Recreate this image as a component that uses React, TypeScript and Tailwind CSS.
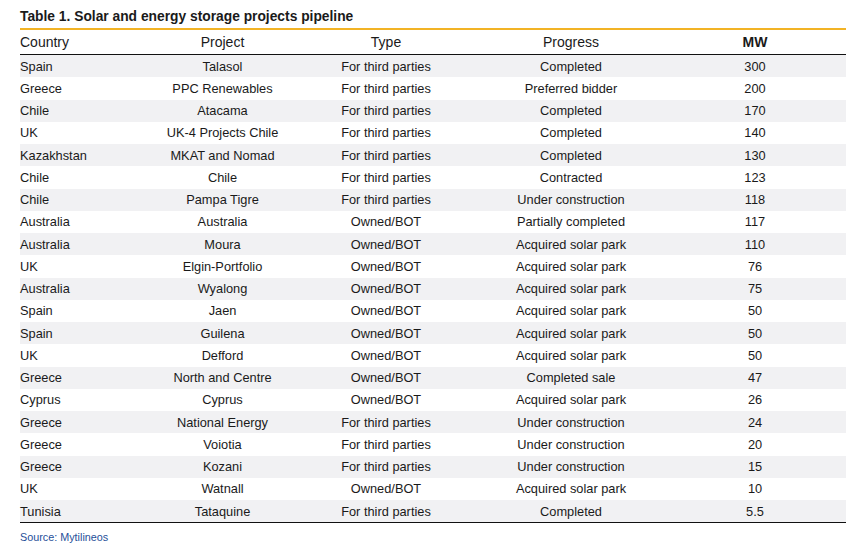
const rows: [string, string, string, string, string][] = [
  ['Spain', 'Talasol', 'For third parties', 'Completed', '300'],
  ['Greece', 'PPC Renewables', 'For third parties', 'Preferred bidder', '200'],
  ['Chile', 'Atacama', 'For third parties', 'Completed', '170'],
  ['UK', 'UK-4 Projects Chile', 'For third parties', 'Completed', '140'],
  ['Kazakhstan', 'MKAT and Nomad', 'For third parties', 'Completed', '130'],
  ['Chile', 'Chile', 'For third parties', 'Contracted', '123'],
  ['Chile', 'Pampa Tigre', 'For third parties', 'Under construction', '118'],
  ['Australia', 'Australia', 'Owned/BOT', 'Partially completed', '117'],
  ['Australia', 'Moura', 'Owned/BOT', 'Acquired solar park', '110'],
  ['UK', 'Elgin-Portfolio', 'Owned/BOT', 'Acquired solar park', '76'],
  ['Australia', 'Wyalong', 'Owned/BOT', 'Acquired solar park', '75'],
  ['Spain', 'Jaen', 'Owned/BOT', 'Acquired solar park', '50'],
  ['Spain', 'Guilena', 'Owned/BOT', 'Acquired solar park', '50'],
  ['UK', 'Defford', 'Owned/BOT', 'Acquired solar park', '50'],
  ['Greece', 'North and Centre', 'Owned/BOT', 'Completed sale', '47'],
  ['Cyprus', 'Cyprus', 'Owned/BOT', 'Acquired solar park', '26'],
  ['Greece', 'National Energy', 'For third parties', 'Under construction', '24'],
  ['Greece', 'Voiotia', 'For third parties', 'Under construction', '20'],
  ['Greece', 'Kozani', 'For third parties', 'Under construction', '15'],
  ['UK', 'Watnall', 'Owned/BOT', 'Acquired solar park', '10'],
  ['Tunisia', 'Tataquine', 'For third parties', 'Completed', '5.5'],
]

// column widths, left to right
const cols = ['w-[131px]', 'w-[152px]', 'w-[175px]', 'w-[195px]', 'w-[173px]']

function Row({ cells, className }: { cells: string[]; className?: string }) {
  return (
    <div className={`flex items-center ${className ?? ''}`}>
      {cells.map((c, i) => (
        <div
          key={i}
          className={`${cols[i]} shrink-0 ${i === 0 ? 'text-left' : 'text-center pr-[9px]'}`}
        >
          {c}
        </div>
      ))}
    </div>
  )
}

export default function App() {
  return (
    <div className="w-[858px] h-[556px] bg-white text-[#1a1a1a] font-['Liberation_Sans',Arial,sans-serif]">
      <div className="ml-[20px] w-[826px] pt-[8px]">
        {/* Title */}
        <div className="text-[13.8px] font-bold leading-[18px] pb-[2px] border-b-2 border-[#f2b325]">
          Table 1. Solar and energy storage projects pipeline
        </div>

        {/* Header */}
        <Row
          cells={['Country', 'Project', 'Type', 'Progress', 'MW']}
          className="h-[25px] text-[14px] font-normal border-b border-[#111] [&>div:last-child]:font-bold"
        />

        {/* Body */}
        <div className="text-[12.8px] border-b-[1.5px] border-[#111]">
          {rows.map((r, i) => (
            <Row
              key={i}
              cells={r}
              className={`h-[22.25px] ${i % 2 === 0 ? 'bg-[#f1f1f3]' : 'bg-white'}`}
            />
          ))}
        </div>

        {/* Source */}
        <div className="mt-[6px] text-[10.8px] text-[#1f4f99]">Source: Mytilineos</div>
      </div>
    </div>
  )
}
